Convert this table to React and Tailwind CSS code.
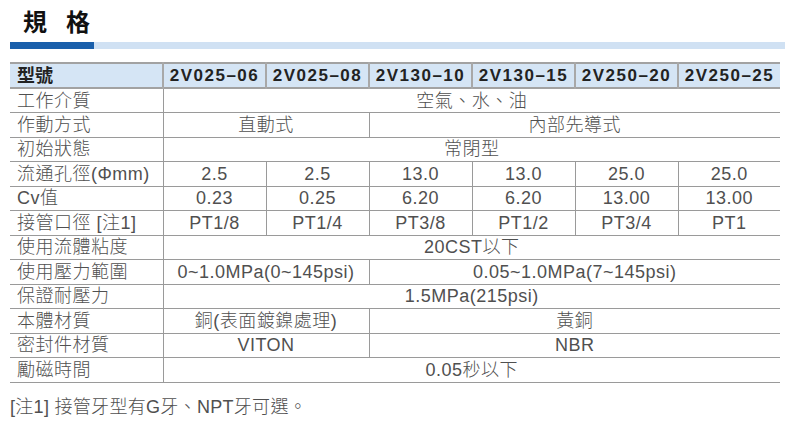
import React from "react";

const font = { fontFamily: '"Liberation Sans", "Noto Sans CJK TC", sans-serif' };

const rows = [
  ["工作介質", [["空氣、水、油", 6]]],
  ["作動方式", [["直動式", 2], ["內部先導式", 4]]],
  ["初始狀態", [["常閉型", 6]]],
  ["流通孔徑(Φmm)", [["2.5", 1], ["2.5", 1], ["13.0", 1], ["13.0", 1], ["25.0", 1], ["25.0", 1]]],
  ["Cv值", [["0.23", 1], ["0.25", 1], ["6.20", 1], ["6.20", 1], ["13.00", 1], ["13.00", 1]]],
  ["接管口徑 [注1]", [["PT1/8", 1], ["PT1/4", 1], ["PT3/8", 1], ["PT1/2", 1], ["PT3/4", 1], ["PT1", 1]]],
  ["使用流體粘度", [["20CST以下", 6]]],
  ["使用壓力範圍", [["0~1.0MPa(0~145psi)", 2], ["0.05~1.0MPa(7~145psi)", 4]]],
  ["保證耐壓力", [["1.5MPa(215psi)", 6]]],
  ["本體材質", [["銅(表面鍍鎳處理)", 2], ["黃銅", 4]]],
  ["密封件材質", [["VITON", 2], ["NBR", 4]]],
  ["勵磁時間", [["0.05秒以下", 6]]],
];

const models = ["2V025–06", "2V025–08", "2V130–10", "2V130–15", "2V250–20", "2V250–25"];

export default function App() {
  return (
    <div className="w-[800px] h-[426px] bg-white overflow-hidden" style={font}>
      <div className="pt-[9px] pl-[23px] text-[24px] leading-[28px] font-bold text-[#111] flex gap-[19px]">
        <span>規</span>
        <span>格</span>
      </div>
      <div className="mt-[5px] ml-[10px] flex h-[7px] w-[775px]">
        <div className="w-[84px] bg-[#1a5fab]" />
        <div className="flex-1 bg-[#d0e1f3]" />
      </div>
      <table className="mt-[13px] ml-[10px] w-[770px] table-fixed border-collapse text-[18px] text-[#505050] tracking-[0.5px] font-light">
        <colgroup>
          <col className="w-[153px]" />
          <col className="w-[103px]" />
          <col className="w-[103px]" />
          <col className="w-[103px]" />
          <col className="w-[103px]" />
          <col className="w-[103px]" />
          <col className="w-[102px]" />
        </colgroup>
        <thead>
          <tr className="h-[25px] bg-[#d5e5f5] border-y-2 border-[#a2a2a2]">
            <th className="text-left pl-[7px] font-bold text-[18px] text-[#222] leading-none tracking-normal">型號</th>
            {models.map((m) => (
              <th
                key={m}
                className="border-l-2 border-[#a8a8a8] text-center font-bold text-[17px] tracking-[1.5px] text-[#222] leading-none"
              >
                {m}
              </th>
            ))}
          </tr>
        </thead>
        <tbody>
          {rows.map(([label, cells]) => (
            <tr key={label} className="h-[24.5px] border-b border-[#9a9a9a]">
              <td className="pl-[7px] leading-none whitespace-nowrap">{label}</td>
              {cells.map(([text, span], i) => (
                <td
                  key={i}
                  colSpan={span}
                  className="border-l border-[#9a9a9a] text-center leading-none whitespace-nowrap"
                >
                  {text}
                </td>
              ))}
            </tr>
          ))}
        </tbody>
      </table>
      <div className="mt-[12px] ml-[10px] text-[18px] leading-[24px] text-[#505050] tracking-[0.3px] font-light">
        [注1] 接管牙型有G牙、NPT牙可選。
      </div>
    </div>
  );
}
